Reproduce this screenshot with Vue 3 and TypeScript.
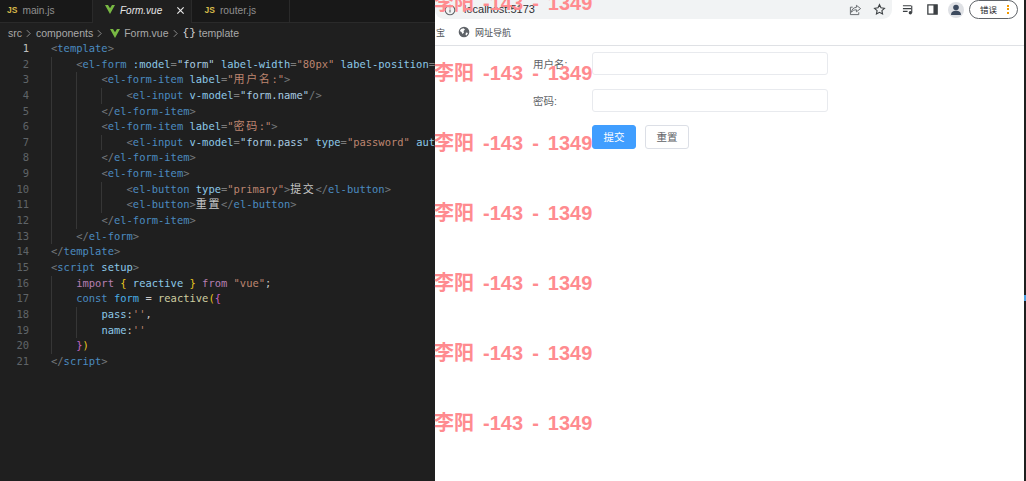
<script setup lang="ts">
interface Row { indent: number; tokens: { cls: string; text: string }[] }

const source: [number, string][] = [
  [0, 'p:<|t:template|p:>'],
  [1, 'p:<|t:el-form|x: |a::model|e:=|v:"form"|x: |a:label-width|e:=|s:"80px"|x: |a:label-position|e:=|s:"right"|p:>'],
  [2, 'p:<|t:el-form-item|x: |a:label|e:=|s:"|c:用户名|s::"|p:>'],
  [3, 'p:<|t:el-input|x: |a:v-model|e:=|v:"form.name"|p:/>'],
  [2, 'p:</|t:el-form-item|p:>'],
  [2, 'p:<|t:el-form-item|x: |a:label|e:=|s:"|c:密码|s::"|p:>'],
  [3, 'p:<|t:el-input|x: |a:v-model|e:=|v:"form.pass"|x: |a:type|e:=|s:"password"|x: |a:autocomplete|e:=|s:"off"|p:/>'],
  [2, 'p:</|t:el-form-item|p:>'],
  [2, 'p:<|t:el-form-item|p:>'],
  [3, 'p:<|t:el-button|x: |a:type|e:=|s:"primary"|p:>|h:提交|p:</|t:el-button|p:>'],
  [3, 'p:<|t:el-button|p:>|h:重置|p:</|t:el-button|p:>'],
  [2, 'p:</|t:el-form-item|p:>'],
  [1, 'p:</|t:el-form|p:>'],
  [0, 'p:</|t:template|p:>'],
  [0, 'p:<|t:script|x: |a:setup|p:>'],
  [1, 'k:import|x: |y:{|x: |a:reactive|x: |y:}|x: |k:from|x: |s:"vue"|w:;'],
  [1, 't:const|x: |n:form|x: |w:=|x: |f:reactive|y:(|m:{'],
  [2, 'a:pass|w::|s:\'\'|w:,'],
  [2, 'a:name|w::|s:\'\''],
  [1, 'm:}|y:)'],
  [0, 'p:</|t:script|p:>'],
]

const rows: Row[] = source.map(([indent, line]) => ({
  indent,
  tokens: line.split('|').map((part) => ({
    cls: 'tok-' + part.slice(0, part.indexOf(':')),
    text: part.slice(part.indexOf(':') + 1),
  })),
}))

const tabs = [
  { name: 'main.js', kind: 'js', active: false },
  { name: 'Form.vue', kind: 'vue', active: true },
  { name: 'router.js', kind: 'js', active: false },
]

const marks = Array.from({ length: 7 }, (_, i) => i)
</script>

<template>
  <div class="screen">
    <section class="editor">
      <div class="tabs">
        <div v-for="tab in tabs" :key="tab.name" class="tab" :class="{ active: tab.active }">
          <span v-if="tab.kind === 'js'" class="js">JS</span>
          <svg v-else class="vue" viewBox="0 0 20 18"><path d="M0 0h6l4 6.500L14 0h6L10 18z" fill="#78b843" /></svg>
          <span class="tab-name">{{ tab.name }}</span>
          <svg v-if="tab.active" class="close" viewBox="0 0 10 10"><path d="M1.500 1.500l7 7M8.500 1.500l-7 7" stroke="#e8e8e8" stroke-width="1.300" /></svg>
        </div>
      </div>
      <div class="crumbs">
        <span>src</span>
        <svg class="chev" viewBox="0 0 6 10"><path d="M1 1l4 4-4 4" fill="none" stroke="#a0a0a0" /></svg>
        <span>components</span>
        <svg class="chev" viewBox="0 0 6 10"><path d="M1 1l4 4-4 4" fill="none" stroke="#a0a0a0" /></svg>
        <svg class="vue small" viewBox="0 0 20 18"><path d="M0 0h6l4 6.500L14 0h6L10 18z" fill="#78b843" /></svg>
        <span>Form.vue</span>
        <svg class="chev" viewBox="0 0 6 10"><path d="M1 1l4 4-4 4" fill="none" stroke="#a0a0a0" /></svg>
        <span class="braces">{}</span>
        <span>template</span>
      </div>
      <div class="code">
        <div v-for="(row, i) in rows" :key="i" class="line">
          <span class="num" :class="{ current: i === 0 }">{{ i + 1 }}</span>
          <span v-for="g in row.indent" :key="g" class="guide"></span>
          <span v-for="(tok, j) in row.tokens" :key="j" :class="tok.cls">{{ tok.text }}</span>
        </div>
      </div>
    </section>

    <section class="browser">
      <div class="toolbar">
        <div class="address">
          <svg class="info" viewBox="0 0 12 12"><circle cx="6" cy="6" r="4.800" fill="none" stroke="#5f6368" stroke-width="1.100" /><path d="M6 5.500v3M6 3.500v1" stroke="#5f6368" stroke-width="1.100" /></svg>
          <span class="url">localhost:5173</span>
          <span class="spacer"></span>
          <svg class="tool" viewBox="0 0 14 14"><path d="M8 2.500l4.500 3.500L8 9.500V7.300C5.500 7.300 3.800 8 2.600 10c.3-3 2-5 5.400-5.300zM10.500 10v2.500h-9v-8H4" fill="none" stroke="#5f6368" stroke-width="1" /></svg>
          <svg class="tool star" viewBox="0 0 14 14"><path d="M7 1.800l1.600 3.400 3.700.5-2.700 2.500.7 3.700L7 10.100l-3.300 1.800.7-3.700-2.700-2.500 3.700-.5z" fill="none" stroke="#3c4043" stroke-width="1.200" /></svg>
        </div>
        <div class="actions">
          <svg class="tool" viewBox="0 0 14 14"><path d="M1 3h9M1 6h9M1 9h5" stroke="#3c4043" stroke-width="1.200" /><path d="M10.500 3v7.500" stroke="#3c4043" stroke-width="1.200" /><circle cx="9" cy="10.500" r="1.800" fill="#3c4043" /></svg>
          <svg class="tool" viewBox="0 0 14 14"><path d="M2 2h10v10H2z" fill="none" stroke="#3c4043" stroke-width="1.400" /><path d="M8 2h4v10H8z" fill="#3c4043" /></svg>
          <span class="avatar"><svg viewBox="0 0 16 16"><circle cx="8" cy="5.500" r="2.800" fill="#3c4a5e" /><path d="M3 13c0-3 2.200-4.300 5-4.300s5 1.300 5 4.300z" fill="#3c4a5e" /></svg></span>
          <span class="pill">
            <span>错误</span>
            <span class="dots"><i></i><i></i><i></i></span>
          </span>
        </div>
      </div>
      <div class="bookmarks">
        <span class="cut">宝</span>
        <svg class="globe" viewBox="0 0 12 12"><circle cx="6" cy="6" r="5.300" fill="#5f6368" /><path d="M3 3l2.500-.8L7 3.500 5.500 5 6 6.500 4.500 8 3.500 6 1.800 5zM8 6.500l2 .5-1.500 2.500-1-.8z" fill="#fff" /></svg>
        <span>网址导航</span>
      </div>
      <div class="page">
        <div class="field">
          <label>用户名:</label>
          <span class="input"></span>
        </div>
        <div class="field">
          <label>密码:</label>
          <span class="input"></span>
        </div>
        <div class="field buttons">
          <button class="btn primary">提交</button>
          <button class="btn">重置</button>
        </div>
      </div>
    </section>

    <span class="scroll-mark"></span>

    <div class="marks">
      <span v-for="m in marks" :key="m">李阳 -143 - 1349</span>
    </div>
  </div>
</template>

<style>
html, body { margin: 0; background: #1f1f1f; }
</style>

<style scoped>
.screen {
  position: relative;
  display: flex;
  width: 1026px;
  height: 481px;
  overflow: hidden;
  background: #1f1f1f;
  font-family: "Liberation Sans", "Noto Sans CJK SC", sans-serif;
}
.editor {
  width: 435px;
  flex: none;
  overflow: hidden;
  background: #1f1f1f;
}
.tabs {
  display: flex;
  height: 22px;
  background: #181818;
  border-bottom: 1px solid #2a2a2a;
}
.tab {
  display: flex;
  align-items: center;
  box-sizing: border-box;
  width: 98.500px;
  height: 23px;
  padding: 0 0 2px 13px;
  gap: 5px;
  border-right: 1px solid #2a2a2a;
  color: #8f8f8f;
  font-size: 10.200px;
}
.tab:first-child { width: 93px; padding-left: 7px; }
.tab.active {
  background: #1f1f1f;
  color: #e6e6e6;
  font-style: italic;
  padding-left: 12px;
  font-size: 10px;
}
.js {
  color: #d7ba4a;
  font-size: 8.500px;
  font-weight: 700;
  font-style: normal;
  margin-top: -2px;
}
.vue { width: 10px; height: 9px; flex: none; margin-top: -2px; }
.vue.small { margin: 0 1px 0 3px; }
.close { width: 9px; height: 9px; margin-left: 9px; }
.crumbs {
  display: flex;
  align-items: center;
  gap: 3px;
  height: 18px;
  padding: 2px 0 0 8px;
  box-sizing: border-box;
  color: #a9a9a9;
  font-size: 10.500px;
}
.chev { width: 5px; height: 9px; margin: 0 2px 0 1px; }
.braces { color: #d4d4d4; font-family: "Liberation Mono", monospace; font-size: 11px; }
.code {
  font-family: "DejaVu Sans Mono", "Noto Sans CJK SC", monospace;
  font-size: 10.460px;
}
.line {
  display: flex;
  height: 15.650px;
  line-height: 15.650px;
  white-space: pre;
  color: #c8c8c8;
}
.num {
  flex: none;
  box-sizing: border-box;
  width: 51px;
  padding-right: 22px;
  text-align: right;
  color: #5f6468;
}
.num.current { color: #c0c0c0; }
.guide {
  flex: none;
  box-sizing: border-box;
  width: 25.200px;
  border-left: 1px solid #363636;
}
.tok-p { color: #75797c; }
.tok-t { color: #4b8bc0; }
.tok-a { color: #8cc8e8; }
.tok-e { color: #7a7a7a; }
.tok-v { color: #a8cbe2; }
.tok-s { color: #bd8570; }
.tok-c { color: #bd8570; font-size: 11px; letter-spacing: 1.600px; }
.tok-h { color: #c8c8c8; font-size: 11px; letter-spacing: 1.600px; }
.tok-w { color: #c8c8c8; }
.tok-k { color: #b67fb2; }
.tok-y { color: #e8c620; }
.tok-m { color: #c766c3; }
.tok-n { color: #4aaee6; }
.tok-f { color: #cdcda0; }
.tok-x { color: #c8c8c8; }

.browser {
  width: 589px;
  flex: none;
  display: flex;
  flex-direction: column;
  background: #fff;
}
.toolbar {
  display: flex;
  align-items: flex-start;
  height: 19px;
}
.address {
  display: flex;
  align-items: center;
  box-sizing: border-box;
  width: 457px;
  height: 19px;
  padding: 0 6px 0 9px;
  background: #f1f3f4;
  border-radius: 0 0 9px 9px;
  font-size: 11px;
}
.info { width: 12px; height: 12px; margin-right: 8px; }
.url { color: #303134; margin-top: -1px; }
.spacer { flex: 1; }
.tool { width: 13px; height: 13px; flex: none; }
.star { margin-left: 11px; }
.actions {
  display: flex;
  align-items: center;
  height: 19px;
  margin-left: 10px;
  gap: 11px;
}
.avatar {
  width: 16px;
  height: 16px;
  margin-left: -2px;
  border-radius: 50%;
  background: #dfe1e5;
  flex: none;
}
.avatar svg { display: block; width: 16px; height: 16px; }
.pill {
  display: flex;
  align-items: center;
  box-sizing: border-box;
  width: 49px;
  height: 19px;
  margin: -1px 0 0 -6px;
  padding-left: 10px;
  border: 1px solid #5f6368;
  border-radius: 10px;
  font-size: 8.500px;
  color: #202124;
}
.dots {
  display: flex;
  flex-direction: column;
  gap: 1.500px;
  margin-left: 10px;
}
.dots i {
  width: 2px;
  height: 2px;
  background: #f29900;
}
.bookmarks {
  display: flex;
  align-items: center;
  box-sizing: border-box;
  height: 27px;
  border-bottom: 1px solid #dfe1e5;
  font-size: 9px;
  color: #4a4d52;
}
.cut {
  width: 10px;
  margin-left: 1px;
  white-space: nowrap;
}
.globe { width: 12px; height: 12px; margin: 0 5px 0 12px; }
.page {
  flex: 1;
  padding: 5px 0 0 98px;
}
.field {
  display: flex;
  align-items: center;
  height: 24px;
  margin-bottom: 13px;
}
.field label {
  width: 59px;
  flex: none;
  font-size: 10.500px;
  color: #606266;
}
.input {
  box-sizing: border-box;
  width: 236px;
  height: 23px;
  border: 1px solid #e8eaee;
  border-radius: 3px;
  background: #fff;
}
.buttons { padding-left: 59px; gap: 9px; }
.btn {
  box-sizing: border-box;
  width: 44px;
  height: 24px;
  padding: 0 0 2px;
  border: 1px solid #dcdfe6;
  border-radius: 3px;
  background: #fff;
  color: #606266;
  font-family: inherit;
  font-size: 10.500px;
}
.btn.primary {
  border-color: #409eff;
  background: #409eff;
  color: #fff;
}
.scroll-mark {
  position: absolute;
  right: 0;
  top: 295px;
  width: 2px;
  height: 6px;
  background: #4a9fe0;
}
.marks {
  position: absolute;
  left: 434px;
  top: -9px;
  display: flex;
  flex-direction: column;
  gap: 46px;
  color: #ff8b8f;
  font-size: 20px;
  line-height: 24px;
  font-weight: 700;
  word-spacing: 3.500px;
  white-space: nowrap;
  pointer-events: none;
}
</style>
